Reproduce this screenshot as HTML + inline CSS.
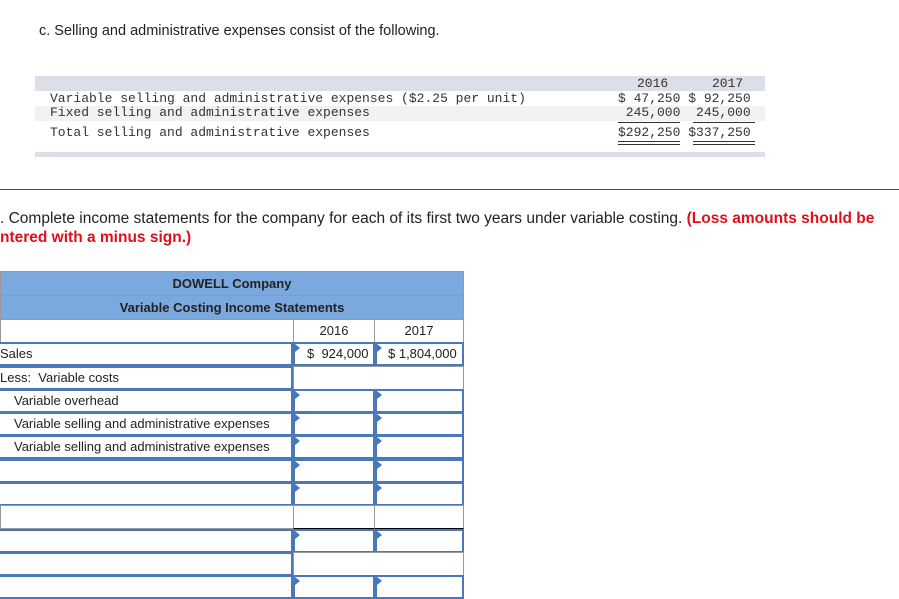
<!DOCTYPE html><html><head><style>
body{margin:0;width:899px;height:591px;overflow:hidden;background:#fff;position:relative;font-family:"Liberation Sans",sans-serif;color:#222}
.a{position:absolute}
.m{font-family:"Liberation Mono",monospace;font-size:13px;line-height:14px;color:#333;white-space:pre}
.c{position:absolute;box-sizing:border-box;font-size:13px;line-height:20px;white-space:nowrap}
.b{border:2px solid #4a78b8}
.g{border:1px solid #999}
.t{width:0;height:0;border-top:4px solid transparent;border-bottom:4px solid transparent;border-left:5px solid #3a78d0;position:absolute;left:0;top:0}
</style></head><body>
<div class="a" style="left:39px;top:23px;font-size:14.5px">c. Selling and administrative expenses consist of the following.</div>
<div class="a" style="left:35px;top:76px;width:730px;height:15px;background:#dcdfe8"></div>
<div class="a" style="left:35px;top:106px;width:730px;height:15px;background:#f1f2f5"></div>
<div class="a" style="left:35px;top:152px;width:730px;height:5px;background:#dcdfe8"></div>
<div class="a m" style="left:637px;top:77px">2016</div>
<div class="a m" style="left:712px;top:77px">2017</div>
<div class="a m" style="left:50px;top:92px">Variable selling and administrative expenses ($2.25 per unit)</div>
<div class="a m" style="left:50px;top:106px">Fixed selling and administrative expenses</div>
<div class="a m" style="left:50px;top:126px">Total selling and administrative expenses</div>
<div class="a m" style="left:618px;top:92px">$ 47,250 $ 92,250</div>
<div class="a m" style="left:618px;top:106px"> 245,000  245,000</div>
<div class="a m" style="left:618px;top:126px">$292,250 $337,250</div>
<div class="a" style="left:618px;top:122px;width:62px;border-top:1px solid #333"></div>
<div class="a" style="left:693px;top:122px;width:62px;border-top:1px solid #333"></div>
<div class="a" style="left:618px;top:141px;width:62px;height:2px;border-top:1px solid #333;border-bottom:1px solid #333"></div>
<div class="a" style="left:693px;top:141px;width:62px;height:2px;border-top:1px solid #333;border-bottom:1px solid #333"></div>
<div class="a" style="left:0;top:189px;width:899px;height:1px;background:#1f5496"></div>
<div class="a" style="left:0;top:209px;font-size:15.5px;line-height:19px;width:899px;white-space:nowrap">. Complete income statements for the company for each of its first two years under variable costing. <b style="color:#e0101a">(Loss amounts should be</b><br><b style="color:#e0101a">ntered with a minus sign.)</b></div>
<div class="c" style="left:0;top:271px;width:464px;height:25px;background:#7ba9de;border:1px solid #999;text-align:center;font-weight:bold;line-height:23px">DOWELL Company</div>
<div class="c" style="left:0;top:295px;width:464px;height:25px;background:#7ba9de;border:1px solid #999;text-align:center;font-weight:bold;line-height:23px">Variable Costing Income Statements</div>
<div class="c g" style="left:0;top:319px;width:294px;height:24px"></div>
<div class="c g" style="left:293px;top:319px;width:82px;height:24px;text-align:center;line-height:22px">2016</div>
<div class="c g" style="left:374px;top:319px;width:90px;height:24px;text-align:center;line-height:22px">2017</div>
<div class="c b" style="left:-2px;top:342px;width:295px;height:24px">Sales</div>
<div class="c b" style="left:293px;top:342px;width:82px;height:24px;padding-left:12px">$&nbsp; 924,000<span class="t"></span></div>
<div class="c b" style="left:375px;top:342px;width:89px;height:24px;padding-left:11px">$&nbsp;1,804,000<span class="t"></span></div>
<div class="c b" style="left:-2px;top:366px;width:295px;height:24px">Less:&nbsp; Variable costs</div>
<div class="c g" style="left:293px;top:366px;width:171px;height:24px"></div>
<div class="c b" style="left:-2px;top:389px;width:295px;height:24px;padding-left:14px">Variable overhead</div>
<div class="c b" style="left:293px;top:389px;width:82px;height:24px"><span class="t"></span></div>
<div class="c b" style="left:375px;top:389px;width:89px;height:24px"><span class="t"></span></div>
<div class="c b" style="left:-2px;top:412px;width:295px;height:24px;padding-left:14px">Variable selling and administrative expenses</div>
<div class="c b" style="left:293px;top:412px;width:82px;height:24px"><span class="t"></span></div>
<div class="c b" style="left:375px;top:412px;width:89px;height:24px"><span class="t"></span></div>
<div class="c b" style="left:-2px;top:435px;width:295px;height:24px;padding-left:14px">Variable selling and administrative expenses</div>
<div class="c b" style="left:293px;top:435px;width:82px;height:24px"><span class="t"></span></div>
<div class="c b" style="left:375px;top:435px;width:89px;height:24px"><span class="t"></span></div>
<div class="c b" style="left:-2px;top:459px;width:295px;height:24px"></div>
<div class="c b" style="left:293px;top:459px;width:82px;height:24px"><span class="t"></span></div>
<div class="c b" style="left:375px;top:459px;width:89px;height:24px"><span class="t"></span></div>
<div class="c b" style="left:-2px;top:482px;width:295px;height:24px"></div>
<div class="c b" style="left:293px;top:482px;width:82px;height:24px"><span class="t"></span></div>
<div class="c b" style="left:375px;top:482px;width:89px;height:24px"><span class="t"></span></div>
<div class="c g" style="left:0;top:505px;width:294px;height:24px"></div>
<div class="c g" style="left:293px;top:505px;width:82px;height:24px;border-bottom:1px solid #000"></div>
<div class="c g" style="left:374px;top:505px;width:90px;height:24px;border-bottom:1px solid #000"></div>
<div class="c b" style="left:-2px;top:529px;width:295px;height:24px"></div>
<div class="c b" style="left:293px;top:529px;width:82px;height:24px"><span class="t"></span></div>
<div class="c b" style="left:375px;top:529px;width:89px;height:24px"><span class="t"></span></div>
<div class="c b" style="left:-2px;top:552px;width:295px;height:24px"></div>
<div class="c g" style="left:293px;top:552px;width:171px;height:24px"></div>
<div class="c b" style="left:-2px;top:575px;width:295px;height:24px"></div>
<div class="c b" style="left:293px;top:575px;width:82px;height:24px"><span class="t"></span></div>
<div class="c b" style="left:375px;top:575px;width:89px;height:24px"><span class="t"></span></div>
</body></html>
